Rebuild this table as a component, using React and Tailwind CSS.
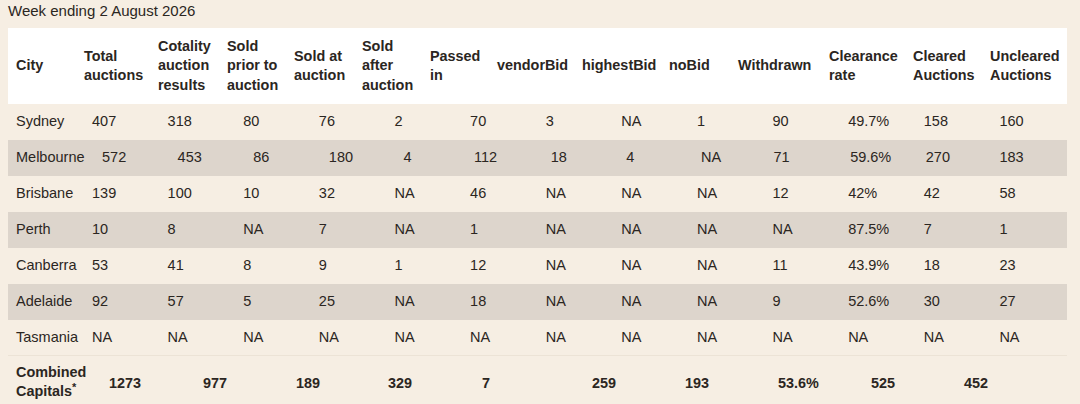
import React from "react";

const headers = [
  ["City"],
  ["Total", "auctions"],
  ["Cotality", "auction", "results"],
  ["Sold", "prior to", "auction"],
  ["Sold at", "auction"],
  ["Sold", "after", "auction"],
  ["Passed", "in"],
  ["vendorBid"],
  ["highestBid"],
  ["noBid"],
  ["Withdrawn"],
  ["Clearance", "rate"],
  ["Cleared", "Auctions"],
  ["Uncleared", "Auctions"],
];

const rows = [
  { city: "Sydney", vals: ["407", "318", "80", "76", "2", "70", "3", "NA", "1", "90", "49.7%", "158", "160"], dark: false },
  { city: "Melbourne", vals: ["572", "453", "86", "180", "4", "112", "18", "4", "NA", "71", "59.6%", "270", "183"], dark: true, shift: true },
  { city: "Brisbane", vals: ["139", "100", "10", "32", "NA", "46", "NA", "NA", "NA", "12", "42%", "42", "58"], dark: false },
  { city: "Perth", vals: ["10", "8", "NA", "7", "NA", "1", "NA", "NA", "NA", "NA", "87.5%", "7", "1"], dark: true },
  { city: "Canberra", vals: ["53", "41", "8", "9", "1", "12", "NA", "NA", "NA", "11", "43.9%", "18", "23"], dark: false },
  { city: "Adelaide", vals: ["92", "57", "5", "25", "NA", "18", "NA", "NA", "NA", "9", "52.6%", "30", "27"], dark: true },
  { city: "Tasmania", vals: ["NA", "NA", "NA", "NA", "NA", "NA", "NA", "NA", "NA", "NA", "NA", "NA", "NA"], dark: false, border: true },
];

const melShift = [
  "pl-[18px]", "pl-[18px]", "pl-[18px]", "pl-[18px]", "pl-[17px]", "pl-[12px]", "pl-[13px]",
  "pl-[13px]", "pl-[12px]", "pl-[9px]", "pl-[10px]", "pl-[10px]", "pl-[8px]",
];

const combined = ["1273", "977", "189", "329", "7", "259", "193", "53.6%", "525", "452"];
const combinedW = [
  "w-[94px]", "w-[93px]", "w-[92px]", "w-[94px]", "w-[110px]", "w-[93px]", "w-[93px]", "w-[93px]", "w-[93px]", "flex-1",
];

export default function App() {
  return (
    <div
      className="w-[1080px] h-[404px] overflow-hidden bg-[#f6eee3] text-[#2b2622]"
      style={{ fontFamily: '"Liberation Sans", Arial, sans-serif' }}
    >
      <div className="h-[28px] pl-2 text-[15px] leading-[22px]">Week ending 2 August 2026</div>
      <div className="mx-2 w-[1059px]">
        <div className="grid h-[76px] grid-cols-[68px_74px_69px_67px_68px_68px_67px_85px_87px_69px_91px_84px_77px_85px] items-center bg-white text-[14.4px] font-bold leading-[19.5px]">
          {headers.map((h, i) => (
            <div key={i} className="px-2">
              {h.map((l, j) => (
                <div key={j} className="whitespace-nowrap">
                  {l}
                </div>
              ))}
            </div>
          ))}
        </div>
        {rows.map((r) => (
          <div
            key={r.city}
            className={
              "grid h-9 grid-cols-[76px_repeat(13,1fr)] items-center text-[14.5px] " +
              (r.dark ? "bg-[#ddd5cc]" : "") +
              (r.border ? " border-b border-[#ece3d6]" : "")
            }
          >
            <div className="whitespace-nowrap pl-2">{r.city}</div>
            {r.vals.map((v, i) => (
              <div key={i} className={"whitespace-nowrap " + (r.shift ? melShift[i] : "pl-2")}>
                {v}
              </div>
            ))}
          </div>
        ))}
        <div className="flex h-[52px] items-center text-[14.4px] font-bold">
          <div className="w-[101px] pl-2 leading-[19px]">
            <div>Combined</div>
            <div>
              Capitals<sup className="text-[11px]">*</sup>
            </div>
          </div>
          {combined.map((v, i) => (
            <div key={i} className={"whitespace-nowrap pt-[3px] " + combinedW[i]}>
              {v}
            </div>
          ))}
        </div>
      </div>
    </div>
  );
}
